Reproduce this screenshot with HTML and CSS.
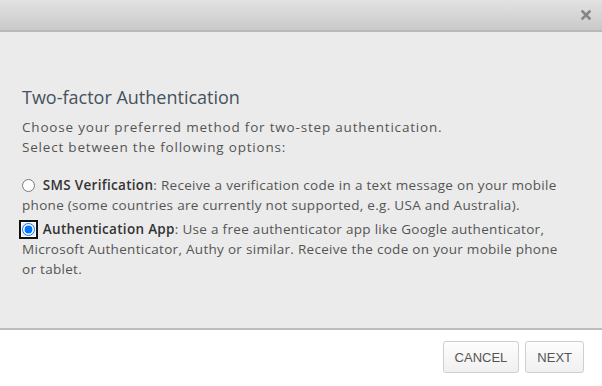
FILE: index.html
```html
<!DOCTYPE html>
<html lang="en">
<head>
    <meta charset="UTF-8">
    <title>Two-factor Authentication</title>
    <link rel="stylesheet" href="styles.css">
</head>
<body>
    <div class="modal">
        <div class="modal-header">
            <button class="close-button" aria-label="Close">
                <svg width="10" height="10" viewBox="0 0 10 10">
                    <path d="M1.5 1.5 L8.5 8.5 M8.5 1.5 L1.5 8.5" stroke="#858585" stroke-width="2.6" stroke-linecap="square"/>
                </svg>
            </button>
        </div>

        <div class="modal-body">
            <h2 class="modal-title">Two-factor Authentication</h2>
            <p class="intro">Choose your preferred method for two-step authentication.<br>Select between the following options:</p>

            <label class="option">
                <input type="radio" name="method" value="sms">
                <span><strong>SMS Verification</strong>: Receive a verification code in a text message on your mobile phone (some countries are currently not supported, e.g. USA and Australia).</span>
            </label>
            <label class="option">
                <input type="radio" name="method" value="app" checked class="focused">
                <span><strong>Authentication App</strong>: Use a free authenticator app like Google authenticator, Microsoft Authenticator, Authy or similar. Receive the code on your mobile phone or tablet.</span>
            </label>
        </div>

        <div class="modal-footer">
            <button class="btn">Cancel</button>
            <button class="btn">Next</button>
        </div>
    </div>
</body>
</html>
```

FILE: styles.css
```css
body {
    margin: 0;
    font-family: "Open Sans", "Liberation Sans", Arial, sans-serif;
    background-color: #fff;
}
.modal {
    width: 602px;
    height: 386px;
    display: flex;
    flex-direction: column;
}
.modal-header {
    height: 30px;
    background: linear-gradient(#e2e2e2, #c9c9c9);
    border-bottom: 2px solid #b9b9b9;
    display: flex;
    justify-content: flex-end;
    align-items: center;
    padding-right: 10px;
}
.close-button {
    border: none;
    background: none;
    padding: 0;
    width: 12px;
    height: 12px;
    display: flex;
    align-items: center;
    justify-content: center;
    margin-top: -1px;
}
.modal-body {
    background-color: #ebebeb;
    padding: 53px 22px 0 22px;
    height: 243px;
    border-bottom: 2px solid #bdbdbd;
    color: #555;
    font-size: 13.5px;
}
.modal-title {
    margin: 0 0 8px 0;
    font-size: 18px;
    font-weight: normal;
    color: #46525d;
    line-height: 24px;
}
.intro {
    margin: 0 0 18px 0;
    line-height: 20px;
    letter-spacing: 0.8px;
}
.option {
    display: block;
    line-height: 20px;
    margin-bottom: 4px;
    padding-right: 18px;
    letter-spacing: 0.3px;
}
.option strong {
    font-weight: 600;
    color: #333;
}
.option input {
    margin: 0 4px 0 0;
    width: 13px;
    height: 13px;
    vertical-align: -2px;
}
/* anel de foco do rádio selecionado */
.option input.focused {
    border-radius: 50%;
    box-shadow: 0 0 0 1px #fff, 0 0 0 3px #111;
}
.modal-footer {
    flex: 1;
    display: flex;
    justify-content: flex-end;
    align-items: flex-start;
    gap: 6px;
    padding: 11px 18px 0 0;
}
.btn {
    font-family: "Liberation Sans", Arial, sans-serif;
    font-size: 13px;
    text-transform: uppercase;
    color: #555;
    background: linear-gradient(#fdfdfd, #f0f0f0);
    border: 1px solid #cfcfcf;
    border-radius: 3px;
    height: 32px;
    padding: 0 11px;
}
```
